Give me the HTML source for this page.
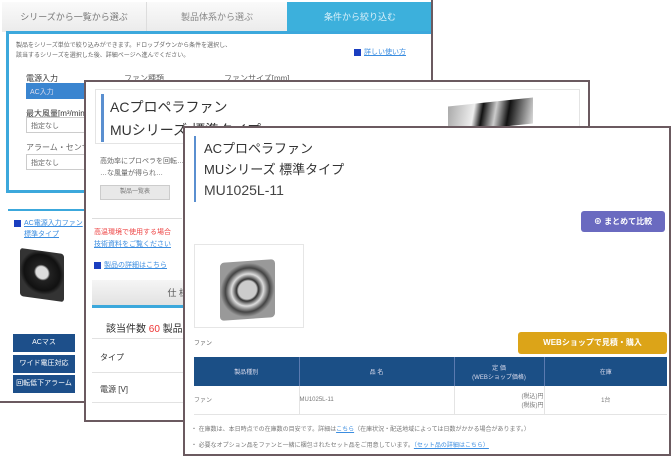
<!DOCTYPE html>
<html><head><meta charset="utf-8"><style>
*{margin:0;padding:0;box-sizing:border-box}
body{width:672px;height:452px;background:#fff;position:relative;overflow:hidden;font-family:"Liberation Sans","Noto Sans CJK JP",sans-serif;color:#333}
.a{position:absolute}
.win{position:absolute;background:#fff;border:2px solid #6b5a60;overflow:hidden}
.t{font-size:8px;color:#666;white-space:nowrap}
.big{font-size:14px;color:#333;white-space:nowrap;font-weight:normal}
.sel{background:#fff;border:1px solid #ccc;font-size:7px;color:#666;padding:3px 4px}
.bb{background:#1d4f8a;color:#fff;font-size:7px;text-align:center;line-height:18px}
.lk{font-size:7px;color:#3b8de0;text-decoration:underline;white-space:nowrap}
.sq{display:inline-block;width:7px;height:7px;background:#1a3ec0;margin-right:3px;vertical-align:middle}
</style></head><body>

<!-- window 1 -->
<div class="win" style="left:-2px;top:-2px;width:435px;height:405px;background:#fff">
 <div class="a" style="left:2px;top:2px;width:145px;height:30px;background:linear-gradient(#fafafa,#ebebeb);border-right:1px solid #ddd;font-size:9px;color:#777;text-align:center;line-height:30px">シリーズから一覧から選ぶ</div>
 <div class="a" style="left:147px;top:2px;width:140px;height:30px;background:linear-gradient(#fafafa,#ebebeb);font-size:9px;color:#888;text-align:center;line-height:30px">製品体系から選ぶ</div>
 <div class="a" style="left:287px;top:2px;width:146px;height:30px;background:#3cb0dc;font-size:9px;color:#d8f0fa;text-align:center;line-height:30px">条件から絞り込む</div>
 <div class="a" style="left:6px;top:31px;width:427px;height:162px;border:3px solid #3ca8dc;border-right:none;background:#fff"></div>
 <div class="a t" style="left:16px;top:40px;font-size:6px">製品をシリーズ単位で絞り込みができます。ドロップダウンから条件を選択し、</div>
 <div class="a t" style="left:16px;top:50px;font-size:6px">該当するシリーズを選択した後、詳細ページへ進んでください。</div>
 <div class="a lk" style="left:354px;top:47px"><span class="sq"></span>詳しい使い方</div>
 <div class="a t" style="left:26px;top:73px;color:#333">電源入力</div>
 <div class="a t" style="left:124px;top:73px">ファン種類</div>
 <div class="a t" style="left:224px;top:73px">ファンサイズ[mm]</div>
 <div class="a" style="left:26px;top:83px;width:60px;height:16px;background:#3a85d0;font-size:7px;color:#dde;padding:4px">AC入力</div>
 <div class="a t" style="left:26px;top:108px;color:#333">最大風量[m³/min]</div>
 <div class="a sel" style="left:26px;top:117px;width:60px;height:16px">指定なし</div>
 <div class="a t" style="left:26px;top:142px">アラーム・センサ有無</div>
 <div class="a sel" style="left:26px;top:154px;width:60px;height:16px">指定なし</div>
 <div class="a" style="left:8px;top:209px;width:100px;border-top:2px solid #3ca8dc"></div>
 <div class="a lk" style="left:14px;top:218px"><span class="sq"></span>AC電源入力ファン</div>
 <div class="a lk" style="left:24px;top:229px">標準タイプ</div>
 <div class="a" style="left:20px;top:251px;width:44px;height:48px;background:radial-gradient(circle at 50% 45%,#ddd 0 6px,#222 8px,#111 18px,#333 22px);transform:skewY(8deg);border-radius:3px"></div>
 <div class="a bb" style="left:13px;top:334px;width:62px">ACマス</div>
 <div class="a bb" style="left:13px;top:355px;width:62px">ワイド電圧対応</div>
 <div class="a bb" style="left:13px;top:375px;width:62px">回転低下アラーム</div>
 <div class="a bb" style="left:77px;top:334px;width:10px"></div>
 <div class="a bb" style="left:77px;top:355px;width:10px"></div>
 <div class="a bb" style="left:77px;top:375px;width:10px"></div>
</div>

<!-- window 2 -->
<div class="win" style="left:84px;top:80px;width:506px;height:342px">
 <div class="a" style="left:9px;top:7px;width:485px;height:55px;border:1px solid #e4e4e4"></div>
 <div class="a" style="left:15px;top:12px;width:3px;height:48px;background:#5a8fd0"></div>
 <div class="a big" style="left:24px;top:15px">ACプロペラファン</div>
 <div class="a big" style="left:24px;top:38px">MUシリーズ 標準タイプ</div>
 <div class="a" style="left:362px;top:20px;width:85px;height:26px;background:linear-gradient(100deg,#aaa,#eee 30%,#111 40%,#ccc 55%,#111 70%,#ddd);transform:skewY(-6deg)"></div>
 <div class="a t" style="left:14px;top:74px;font-size:7px">高効率にプロペラを回転…</div>
 <div class="a t" style="left:14px;top:86px;font-size:7px">…な風量が得られ…</div>
 <div class="a" style="left:14px;top:103px;width:70px;height:15px;background:#e8e8e8;border:1px solid #ccc;font-size:6px;color:#777;text-align:center;line-height:13px">製品一覧表</div>
 <div class="a" style="left:6px;top:136px;width:90px;border-top:1px solid #ddd"></div>
 <div class="a" style="left:8px;top:145px;font-size:7px;color:#e44;white-space:nowrap">高温環境で使用する場合</div>
 <div class="a lk" style="left:8px;top:157px">技術資料をご覧ください</div>
 <div class="a lk" style="left:8px;top:178px"><span class="sq"></span>製品の詳細はこちら</div>
 <div class="a" style="left:6px;top:198px;width:100px;height:25px;background:linear-gradient(#f5f5f5,#e2e2e2);font-size:9px;color:#555;text-align:right;padding:6px 4px">仕 様</div>
 <div class="a" style="left:6px;top:223px;width:100px;height:3px;background:#3ca8dc"></div>
 <div class="a" style="left:20px;top:238px;font-size:10px;color:#333;white-space:nowrap">該当件数 <span style="color:#e33">60</span> 製品</div>
 <div class="a" style="left:6px;top:256px;width:100px;border-top:1px solid #e2e2e2"></div>
 <div class="a t" style="left:14px;top:270px;color:#333">タイプ</div>
 <div class="a" style="left:6px;top:290px;width:100px;border-top:1px solid #e2e2e2"></div>
 <div class="a t" style="left:14px;top:302px;color:#333">電源 [V]</div>
 <div class="a" style="left:6px;top:320px;width:100px;border-top:1px solid #e2e2e2"></div>
</div>

<!-- window 3 -->
<div class="win" style="left:183px;top:126px;width:488px;height:330px">
 <div class="a" style="left:9px;top:8px;width:2px;height:66px;background:#5a8fd0"></div>
 <div class="a big" style="left:19px;top:10px;font-size:13px">ACプロペラファン</div>
 <div class="a big" style="left:19px;top:31px;font-size:13px">MUシリーズ 標準タイプ</div>
 <div class="a big" style="left:19px;top:54px;font-size:14px;color:#444">MU1025L-11</div>
 <div class="a" style="left:396px;top:83px;width:84px;height:21px;background:#6a6ac0;border-radius:3px;font-size:8px;color:#fff;font-weight:bold;text-align:center;line-height:21px">⊕ まとめて比較</div>
 <div class="a" style="left:9px;top:116px;width:110px;height:84px;border:1px solid #e6e6e6"></div>
 <div class="a" style="left:35px;top:133px;width:55px;height:58px;background:radial-gradient(circle at 50% 50%,#ccc 0 9px,#333 11px,#ddd 16px,#444 22px,#999 27px);border-radius:4px;transform:skewY(-4deg)"></div>
 <div class="a t" style="left:9px;top:210px;font-size:6px">ファン</div>
 <div class="a" style="left:333px;top:204px;width:149px;height:22px;background:#dca418;border-radius:3px;font-size:8px;color:#fff;font-weight:bold;text-align:center;line-height:22px">WEBショップで見積・購入</div>
 <table class="a" style="left:9px;top:229px;width:473px;border-collapse:collapse;font-size:6px">
  <tr style="background:#1b4f86;color:#dde;height:29px;text-align:center">
   <td style="width:105px;border-right:1px solid #5a7ab0">製品種別</td><td style="width:155px;border-right:1px solid #5a7ab0">品 名</td><td style="width:90px;border-right:1px solid #5a7ab0">定 価<br>(WEBショップ価格)</td><td>在庫</td></tr>
  <tr style="height:28px;color:#777;border-bottom:1px solid #e4e4e4"><td style="border-right:1px solid #e4e4e4">ファン</td><td style="border-right:1px solid #e4e4e4">MU1025L-11</td><td style="border-right:1px solid #e4e4e4;text-align:right">(税込)円<br>(税抜)円</td><td style="text-align:center">1台</td></tr>
 </table>
 <div class="a t" style="left:6px;top:296px;font-size:6px;color:#777">・ 在庫数は、本日時点での在庫数の目安です。詳細は<span style="color:#3b8de0;text-decoration:underline">こちら</span>（在庫状況・配送地域によっては日数がかかる場合があります。）</div>
 <div class="a t" style="left:6px;top:312px;font-size:6px;color:#777">・ 必要なオプション品をファンと一緒に梱包されたセット品をご用意しています。<span style="color:#3b8de0;text-decoration:underline">（セット品の詳細はこちら）</span></div>
</div>
</body></html>
